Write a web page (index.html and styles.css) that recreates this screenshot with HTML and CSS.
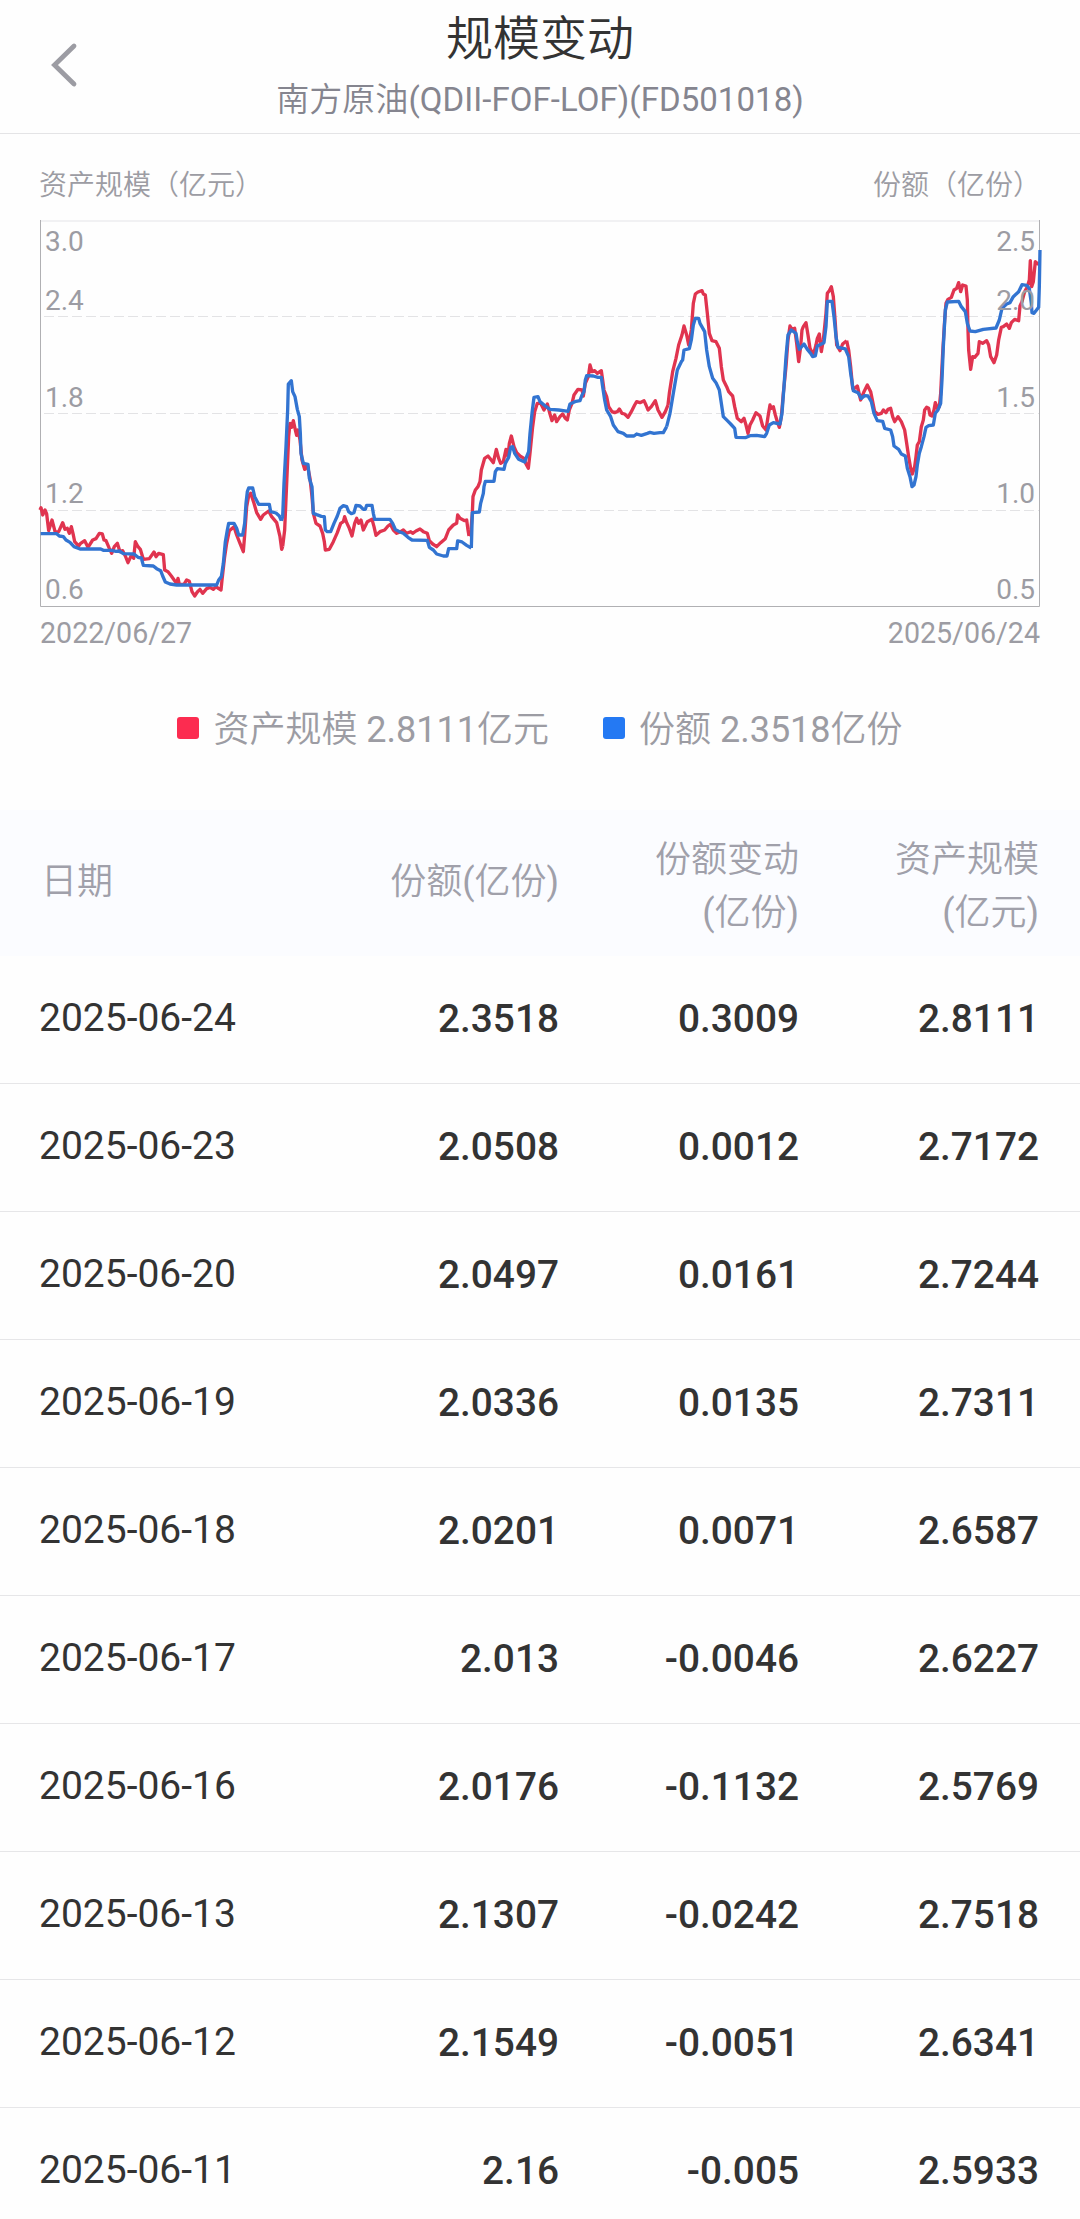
FILE: index.html
```html
<!DOCTYPE html>
<html lang="zh-CN">
<head>
<meta charset="utf-8">
<title>规模变动</title>
<link rel="stylesheet" href="styles.css">
</head>
<body>
<header class="topbar">
  <svg class="back" width="30" height="48" viewBox="0 0 30 48"><path d="M25 5L5.5 24L25 43"/></svg>
  <h1 class="title">规模变动</h1>
  <p class="subtitle">南方原油(QDII-FOF-LOF)(FD501018)</p>
</header>
<main>
  <section class="panel">
    <div class="units"><span>资产规模（亿元）</span><span>份额（亿份）</span></div>
    <svg class="chart" width="1008" height="388" viewBox="36 220 1008 388">
      <path class="top-line" d="M40 221H1040"/>
      <path class="grid" d="M44 316.5H1039M44 413.5H1039M44 510.5H1039"/>
      <path class="frame" d="M40.5 220V606.5H1039.5V220"/>
      <g class="lines" transform="translate(30 210) scale(.33333)">
        <g class="assets">
          <polyline points="30,900 33,893 38,915 45,900 50,912 56,962 66,930 76,968 86,965 98,938 105,958 112,955 118,970 124,950 130,975 134,995 146,1008 152,1000 164,992 174,1012 188,990 198,986 208,970 217,972 222,990 228,992 237,1013 245,1030 253,1010 262,1000 270,1025 278,1022 286,1038 294,1058 304,1036 311,1045 316,995 324,1010 331,1018 340,1048 358,1046 372,1026 378,1040 386,1030 400,1034 404,1080 414,1085 424,1098 434,1112 440,1120 444,1105 448,1123 462,1123 470,1110 478,1114 486,1145 494,1158 502,1146 510,1138 518,1150 530,1136 540,1132 550,1138 558,1130 566,1136 573,1140 576,1110 584,1040 590,1000 598,962 612,950 620,975 630,1000 640,1025 644,975 650,890 656,858 662,850 672,880 680,908 692,928 700,915 716,903 725,920 740,938 750,980 755,1018 758,1010"/>
          <polyline transform="translate(540 420)" points="218,590 224,540 230,400 236,260 240,220 245,232 250,212 256,240 260,256 264,240 270,270 276,330 284,358 292,345 300,385 306,440 310,490 318,520 330,528 338,550 343,575 346,600 358,598 370,575 382,548 392,520 400,515 404,500 410,518 418,535 426,558 434,520 440,505 446,520 453,510 460,540 472,515 486,508 492,530 498,556 510,545 524,540 534,528 541,523 550,540 560,550 572,545 580,540 590,550 602,545 608,550 618,543 630,537 640,545 652,550 658,572 668,582 680,590 692,578 706,566 716,540 730,525 740,520 743,495 750,505 764,512 770,510 774,540 777,558"/>
          <polyline transform="translate(1230 390)" points="87,588 92,580 97,520 99,470 106,450 114,440 120,425 124,390 134,355 144,348 152,358 160,368 169,328 176,355 182,370 190,365 198,328 204,350 208,310 214,288 222,320 230,338 240,348 252,355 258,372 265,385 270,340 278,260 284,215 292,190 302,190 312,210 322,192 330,222 336,242 344,225 350,245 360,230 368,222 376,235 382,240 388,210 396,190 402,165 414,148 426,150 430,168 436,130 445,110 450,75 456,95 464,92 472,100 484,92 488,120 492,150 500,170 506,200 516,215 524,218 532,215 538,207 546,220 554,222 564,232 574,215 584,195 590,185 600,188 606,185 612,182 618,195 624,210 634,200 646,182 654,210 666,232 676,215 684,195"/>
          <polyline transform="translate(1830 180)" points="84,405 88,370 98,305 108,265 116,225 126,195 132,168 140,195 146,225 154,180 160,100 166,72 174,66 186,62 190,72 196,75 202,130 208,190 216,212 228,215 238,235 244,290 250,330 260,350 266,365 278,378 284,410 292,445 304,455 312,445 318,465 324,490 330,465 338,450 348,428 360,438 368,468 378,480 384,440 390,405 394,415 400,410 406,435 412,455 418,472 424,440 430,370 438,290 444,210 450,168 456,178 464,175 470,220 476,275 482,230 486,180 490,170 498,158 504,195 510,235 520,255 528,225 532,205 538,192 544,245 550,210 558,130 562,70 568,62 574,50 580,80 586,160 590,225 600,242 608,222 620,212"/>
          <polyline transform="translate(2430 30)" points="20,362 26,390 32,440 38,505 44,505 52,498 62,540 72,515 82,495 92,515 98,545 104,575 114,583 124,580 130,570 138,578 144,568 152,565 158,590 164,605 174,590 184,605 194,630 200,670 206,710 212,745 217,762 224,740 228,710 232,675 238,665 244,620 250,600 254,570 260,562 266,565 270,585 276,588 282,570 286,548 292,565 298,560 302,520 308,400 314,300 318,250 324,238 334,232 342,210 350,205 356,188 362,215 368,195 378,198 382,240 384,330 386,390 392,448 398,410 404,412 414,400 418,365 428,370 440,362 446,375 452,410 462,428 470,405 476,360 484,322 490,320 500,312 508,325 514,308 524,298 536,302 540,258 546,245 554,215 562,200 568,180 571,122 575,200 580,185 586,125 594,132 598,128"/>
        </g>
        <g class="shares">
          <polyline points="32,971 80,971 88,978 100,980 108,990 120,997 132,1010 150,1017 212,1017 220,1021 245,1021 258,1024 268,1023 280,1031 312,1032 324,1042 334,1044 340,1066 370,1068 380,1076 392,1082 398,1098 406,1116 420,1122 440,1125 560,1125 566,1110 574,1100 580,1060 586,995 592,960 596,940 612,940 620,955 626,975 638,975 644,940 648,880 652,845 656,834 668,834 674,860 686,883 718,883 722,905 738,909 748,918 754,932"/>
          <polyline transform="translate(540 420)" points="214,512 218,500 222,400 228,290 233,180 235,102 244,92 248,125 255,140 262,178 268,200 271,250 273,310 280,340 294,343 298,385 306,410 310,490 320,494 334,499 343,500 346,540 352,545 362,545 372,520 382,498 390,475 400,467 410,470 416,485 424,491 432,488 438,466 450,468 460,478 466,478 470,466 486,466 490,490 494,508 540,508 548,520 556,538 568,545 580,550 594,562 606,570 652,571 658,592 670,600 680,612 700,618 711,618 716,596 740,596 743,573 756,576 770,586 784,594"/>
          <polyline transform="translate(1230 390)" points="94,624 97,518 118,516 122,490 130,460 132,440 136,424 162,424 166,395 172,386 192,388 196,370 206,352 212,322 218,320 224,340 236,358 254,366 260,350 266,335 270,280 276,220 282,172 294,170 300,185 316,198 330,208 356,210 370,212 384,214 390,192 408,184 420,182 426,165 432,155 436,120 440,107 460,108 474,112 484,112 488,140 494,180 500,210 512,230 520,255 534,275 550,280 560,288 582,288 590,282 604,286 622,280 630,277 642,280 660,278 670,278 680,260"/>
          <polyline transform="translate(1830 180)" points="80,470 90,430 100,370 112,300 124,275 128,270 132,240 148,236 154,210 160,165 166,145 176,145 180,160 194,185 200,240 208,290 218,325 228,338 238,360 244,400 250,440 262,452 272,462 284,475 288,502 316,503 330,497 350,496 374,500 380,490 388,465 400,458 420,462 426,430 432,350 438,260 444,195 454,180 468,190 472,215 478,238 492,222 502,238 512,250 518,260 526,258 532,228 552,218 558,170 562,94 576,94 582,140 588,200 594,232 616,237 626,260"/>
          <polyline transform="translate(2430 30)" points="26,410 32,460 40,512 54,518 64,535 74,527 84,528 94,545 102,580 112,602 128,604 134,625 152,630 158,650 162,678 176,688 184,702 196,708 202,745 210,770 216,800 222,795 228,770 232,735 238,700 244,680 252,650 258,622 266,617 280,615 286,580 294,570 302,550 306,480 310,380 316,270 322,246 356,244 364,260 376,275 382,310 390,333 406,335 430,328 468,324 478,300 486,265 500,252 510,248 520,230 536,215 546,194 560,196 568,206 574,250 576,278 582,280 596,262 598,200 600,90"/>
        </g>
      </g>
      <g class="ticks">
        <text x="45" y="251">3.0</text><text x="45" y="310">2.4</text><text x="45" y="407">1.8</text><text x="45" y="503">1.2</text><text x="45" y="599">0.6</text>
      </g>
      <g class="ticks ticks-right">
        <text x="1035" y="251">2.5</text><text x="1035" y="310">2.0</text><text x="1035" y="407">1.5</text><text x="1035" y="503">1.0</text><text x="1035" y="599">0.5</text>
      </g>
    </svg>
    <div class="dates"><span>2022/06/27</span><span>2025/06/24</span></div>
    <div class="legend">
      <span class="item"><i class="swatch red"></i>资产规模 2.8111亿元</span>
      <span class="item"><i class="swatch blue"></i>份额 2.3518亿份</span>
    </div>
  </section>
  <section class="table">
    <div class="row head"><span class="single day">日期</span><span class="single">份额(亿份)</span><span>份额变动<br>(亿份)</span><span>资产规模<br>(亿元)</span></div>
    <div class="row"><span>2025-06-24</span><b>2.3518</b><b>0.3009</b><b>2.8111</b></div>
    <div class="row"><span>2025-06-23</span><b>2.0508</b><b>0.0012</b><b>2.7172</b></div>
    <div class="row"><span>2025-06-20</span><b>2.0497</b><b>0.0161</b><b>2.7244</b></div>
    <div class="row"><span>2025-06-19</span><b>2.0336</b><b>0.0135</b><b>2.7311</b></div>
    <div class="row"><span>2025-06-18</span><b>2.0201</b><b>0.0071</b><b>2.6587</b></div>
    <div class="row"><span>2025-06-17</span><b>2.013</b><b>-0.0046</b><b>2.6227</b></div>
    <div class="row"><span>2025-06-16</span><b>2.0176</b><b>-0.1132</b><b>2.5769</b></div>
    <div class="row"><span>2025-06-13</span><b>2.1307</b><b>-0.0242</b><b>2.7518</b></div>
    <div class="row"><span>2025-06-12</span><b>2.1549</b><b>-0.0051</b><b>2.6341</b></div>
    <div class="row"><span>2025-06-11</span><b>2.16</b><b>-0.005</b><b>2.5933</b></div>
  </section>
</main>
</body>
</html>
```
FILE: styles.css
```css
* { box-sizing: border-box; }
body {
  margin: 0;
  width: 1080px;
  height: 2219px;
  overflow: hidden;
  background: #fefefe;
  color: #333;
  font-family: Roboto, "Noto Sans CJK SC DemiLight", "Noto Sans CJK SC", sans-serif;
}
.topbar {
  position: relative;
  height: 134px;
  padding-top: 9px;
  border-bottom: 1px solid #e4e4e6;
  text-align: center;
}
.back { position: absolute; left: 49px; top: 41px; }
.back path { fill: none; stroke: #9c9ca3; stroke-width: 4.8; stroke-linecap: round; }
.title { margin: 0; font-size: 47px; line-height: 60px; font-weight: 400; }
.subtitle { margin: 7px 0 0; font-size: 33px; line-height: 48px; letter-spacing: .05px; color: #85858f; }
.panel { height: 676px; padding: 32px 36px 0; color: #9c9ca3; }
.units, .dates { display: flex; justify-content: space-between; padding: 0 4px; font-size: 28px; }
.units { height: 54px; padding: 0 3px; line-height: 40px; }
.dates { height: 40px; line-height: 40px; margin-top: 5px; font-size: 28.6px; }
.chart { display: block; }
.chart path { fill: none; }
.top-line { stroke: #f1f1f3; stroke-width: 2; }
.frame { stroke: #b0b0b3; stroke-width: 1; }
.grid { stroke: #e3e3e5; stroke-width: 1; stroke-dasharray: 10 4; }
.lines { fill: none; stroke-width: 10; stroke-linejoin: round; }
.assets { stroke: #e0344f; }
.shares { stroke: #3274d1; }
.ticks { font-size: 28px; fill: #9c9ca3; }
.ticks-right { text-anchor: end; }
.legend { display: flex; justify-content: center; gap: 54px; margin-top: 53px; font-size: 36px; line-height: 48px; }
.item { display: flex; align-items: center; gap: 14px; }
.swatch { width: 22px; height: 22px; border-radius: 3px; margin-top: -4px; }
.red { background: #fc2c50; }
.blue { background: #2479f3; }
.row {
  display: grid;
  grid-template-columns: 261px 259px 240px 240px;
  align-items: center;
  height: 128px;
  padding: 0 41px 3px 39px;
  border-bottom: 1px solid #e6e6e8;
  font-size: 39px;
}
.row > :not(:first-child) { text-align: right; }
.row b { font-weight: 500; font-size: 38.8px; }
.head {
  height: 146px;
  padding-top: 7px;
  padding-bottom: 0;
  border: 0;
  background: #fbfcff;
  color: #a0a0aa;
  font-size: 36px;
  line-height: 53px;
}
.single { padding-bottom: 8px; }
.day { padding-left: 2px; }
```
